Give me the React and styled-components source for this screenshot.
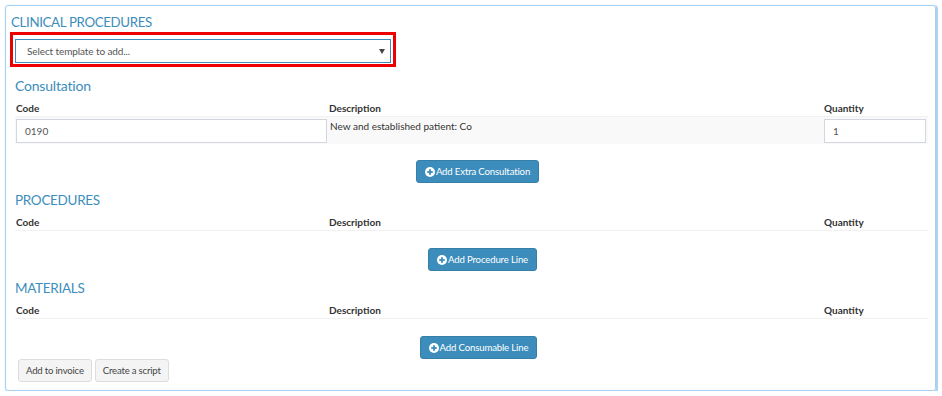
import React from 'react';
import styled, { createGlobalStyle } from 'styled-components';

const GlobalStyle = createGlobalStyle`
  html, body {
    margin: 0;
    padding: 0;
    background: #ffffff;
    font-family: Lato, "Open Sans", sans-serif;
    color: #333333;
  }
  * {
    box-sizing: border-box;
  }
`;

const Panel = styled.div`
  margin: 5px 0 0 5px;
  width: 931px;
  height: 386px;
  border: 1px solid #a6cff1;
  border-radius: 3px;
  box-shadow: 1px 1px 1px 1px #a9d1f3;
  padding: 6px 0 0 5px;
`;

const Title = styled.div`
  font-size: 13.3px;
  letter-spacing: -0.35px;
  line-height: 20px;
  color: #3c8dbc;
  text-transform: uppercase;
  height: 20px;
`;

const Highlight = styled.div`
  width: 386px;
  border: 3px solid #ee0000;
  padding: 4px 2px 1px 2px;
  margin: 0 0 0 -1px;
`;

const SelectBox = styled.div`
  position: relative;
  height: 24px;
  border: 1px solid #3c8dbc;
  font-size: 10px;
  letter-spacing: -0.1px;
  line-height: 22px;
  color: #555555;
  padding-left: 11px;
`;

const Caret = styled.span`
  position: absolute;
  right: 5px;
  top: 9px;
  width: 0;
  height: 0;
  border-left: 3px solid transparent;
  border-right: 3px solid transparent;
  border-top: 5px solid #444444;
`;

const Body = styled.div`
  padding: 0 7px 0 4px;
`;

const SectionTitle = styled.div`
  font-size: ${(p) => (p.$caps ? '13.5px' : '14px')};
  letter-spacing: ${(p) => (p.$caps ? '-0.3px' : '-0.2px')};
  line-height: 20px;
  color: #3c8dbc;
  text-transform: ${(p) => (p.$caps ? 'uppercase' : 'none')};
  margin-top: ${(p) => p.$top}px;
`;

const Table = styled.div`
  display: grid;
  grid-template-columns: 313px 495px 1fr;
  margin-top: 5px;
`;

const HeadCell = styled.div`
  font-size: 10px;
  font-weight: 700;
  line-height: 14px;
  color: #333333;
  padding: 0 1px 1px;
  border-bottom: 1px solid #f1f1f1;
`;

const Cell = styled.div`
  background: #f9f9f9;
  padding: 2px 1px 1px;
  font-size: 10px;
  line-height: 12px;
  color: #333333;
  min-height: 27px;
`;

const TextCell = styled(Cell)`
  padding: 3px 2px 0;
`;

const Input = styled.div`
  height: 24px;
  border: 1px solid #d2d6de;
  background: #ffffff;
  font-size: 10px;
  line-height: 22px;
  color: #555555;
  padding-left: 8px;
  width: ${(p) => p.$width}px;
`;

const ActionRow = styled.div`
  display: flex;
  justify-content: center;
  padding-left: ${(p) => p.$shift || 12}px;
  margin-top: ${(p) => p.$top}px;
`;

const PrimaryButton = styled.button`
  display: inline-flex;
  align-items: center;
  height: 23px;
  padding: 0 8px;
  border: 1px solid #367fa9;
  border-radius: 3px;
  background: #3c8dbc;
  color: #ffffff;
  font-family: Lato, "Open Sans", sans-serif;
  font-size: 9.6px;
  letter-spacing: -0.15px;
  cursor: pointer;
  svg {
    margin-right: 1px;
  }
`;

const Footer = styled.div`
  display: flex;
  gap: 3px;
  padding-left: 3px;
`;

const DefaultButton = styled.button`
  height: 23px;
  padding: 0 7px;
  border: 1px solid #dddddd;
  border-radius: 3px;
  background: #f4f4f4;
  color: #444444;
  font-family: Lato, "Open Sans", sans-serif;
  font-size: 9.6px;
  letter-spacing: -0.2px;
  cursor: pointer;
`;

const PlusCircle = () => (
  <svg width="10" height="10" viewBox="0 0 10 10">
    <circle cx="5" cy="5" r="5" fill="#ffffff" />
    <rect x="2.2" y="4.1" width="5.6" height="1.8" fill="#3c8dbc" />
    <rect x="4.1" y="2.2" width="1.8" height="5.6" fill="#3c8dbc" />
  </svg>
);

const Head = () => (
  <>
    <HeadCell>Code</HeadCell>
    <HeadCell>Description</HeadCell>
    <HeadCell>Quantity</HeadCell>
  </>
);

const App = () => {
  return (
    <>
      <GlobalStyle />
      <Panel>
        <Title>Clinical Procedures</Title>
        <Highlight>
          <SelectBox>
            Select template to add...
            <Caret />
          </SelectBox>
        </Highlight>

        <Body>
          <SectionTitle $top={9}>Consultation</SectionTitle>
          <Table>
            <Head />
            <Cell>
              <Input $width={311}>0190</Input>
            </Cell>
            <TextCell>New and established patient: Co</TextCell>
            <Cell>
              <Input $width={102}>1</Input>
            </Cell>
          </Table>
          <ActionRow $top={16}>
            <PrimaryButton>
              <PlusCircle />
              Add Extra Consultation
            </PrimaryButton>
          </ActionRow>

          <SectionTitle $caps $top={7}>Procedures</SectionTitle>
          <Table>
            <Head />
          </Table>
          <ActionRow $top={17} $shift={22}>
            <PrimaryButton>
              <PlusCircle />
              Add Procedure Line
            </PrimaryButton>
          </ActionRow>

          <SectionTitle $caps $top={7}>Materials</SectionTitle>
          <Table>
            <Head />
          </Table>
          <ActionRow $top={17} $shift={14}>
            <PrimaryButton>
              <PlusCircle />
              Add Consumable Line
            </PrimaryButton>
          </ActionRow>

          <Footer>
            <DefaultButton>Add to invoice</DefaultButton>
            <DefaultButton>Create a script</DefaultButton>
          </Footer>
        </Body>
      </Panel>
    </>
  );
};

export default App;
